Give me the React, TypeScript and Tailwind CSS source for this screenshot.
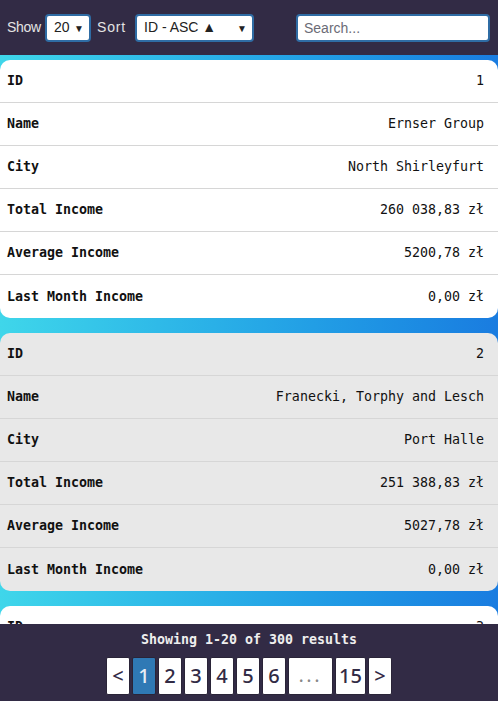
import React from "react";

const mono = "font-['DejaVu_Sans_Mono','Liberation_Mono',monospace]";

const companies = [
  {
    id: 1,
    name: "Ernser Group",
    city: "North Shirleyfurt",
    total: "260 038,83 zł",
    average: "5200,78 zł",
    lastMonth: "0,00 zł",
  },
  {
    id: 2,
    name: "Franecki, Torphy and Lesch",
    city: "Port Halle",
    total: "251 388,83 zł",
    average: "5027,78 zł",
    lastMonth: "0,00 zł",
  },
  {
    id: 3,
    name: "Bode - Kuhic",
    city: "Lake Ernestine",
    total: "248 112,40 zł",
    average: "4962,25 zł",
    lastMonth: "0,00 zł",
  },
];

const Row = ({ label, value, last }: { label: string; value: React.ReactNode; last?: boolean }) => (
  <div
    className={`flex h-[43px] items-center justify-between pl-[7px] pr-[14px] ${
      last ? "" : "border-b border-[#d6d6d6]"
    }`}
  >
    <span className="font-bold text-[#111]">{label}</span>
    <span className="text-[#111]">{value}</span>
  </div>
);

const Card = ({ c, odd }: { c: (typeof companies)[number]; odd: boolean }) => (
  <div className={`shrink-0 overflow-hidden rounded-[10px] ${odd ? "bg-[#e8e8e8]" : "bg-white"}`}>
    <Row label="ID" value={c.id} />
    <Row label="Name" value={c.name} />
    <Row label="City" value={c.city} />
    <Row label="Total Income" value={c.total} />
    <Row label="Average Income" value={c.average} />
    <Row label="Last Month Income" value={c.lastMonth} last />
  </div>
);

const Select = ({ value, className }: { value: string; className: string }) => (
  <div
    className={`relative flex h-[28px] items-center rounded-[4px] border-2 border-[#2f6ca4] bg-white pl-[7px] font-['Liberation_Sans',sans-serif] text-[14px] text-[#222] ${className}`}
  >
    {value}
    <span className="absolute right-[5px] top-[5px] text-[10px] text-[#222]">▼</span>
  </div>
);

const PageBtn = ({ children, active, w = "w-[24px]" }: { children: React.ReactNode; active?: boolean; w?: string }) => (
  <button
    className={`flex h-[38px] ${w} items-center justify-center rounded-[2px] border border-[#2a2438] text-[20px] font-medium ${
      active ? "bg-[#2f79b5] text-[#e8eef5]" : "bg-white text-[#322b45]"
    }`}
  >
    {children}
  </button>
);

export default function App() {
  return (
    <div className="flex h-[701px] w-[498px] flex-col overflow-hidden bg-gradient-to-r from-[#3fd6ea] to-[#1a7ce0]">
      <header className="flex h-[55px] shrink-0 items-center bg-[#322b45] pl-[7px] pr-[8px] font-['Liberation_Sans',sans-serif] text-[14px] text-[#e4e4e4]">
        <span className="w-[31px] tracking-[-0.3px]">Show</span>
        <Select value="20" className="ml-[7px] w-[46px]" />
        <span className="ml-[6px] w-[32px] tracking-[0.8px]">Sort</span>
        <Select value="ID - ASC ▲" className="ml-[6px] w-[119px]" />
        <input
          placeholder="Search..."
          className="ml-auto h-[28px] w-[194px] rounded-[4px] border-2 border-[#2f6ca4] bg-white px-[6px] font-['Liberation_Sans',sans-serif] text-[14px] text-[#222] placeholder:text-[#6b6b76] outline-none"
        />
      </header>

      <main className={`flex min-h-0 flex-1 flex-col gap-[15px] overflow-hidden pt-[5px] text-[13.3px] ${mono}`}>
        {companies.map((c, i) => (
          <Card key={c.id} c={c} odd={i % 2 === 1} />
        ))}
      </main>

      <footer className="flex h-[77px] shrink-0 flex-col items-center bg-[#322b45] pt-[6px]">
        <p className={`text-[13.3px] font-bold text-[#eeeeee] ${mono}`}>Showing 1-20 of 300 results</p>
        <div className="mt-[7px] flex gap-[2px] font-['Noto_Sans',sans-serif]">
          <PageBtn>&lt;</PageBtn>
          <PageBtn active>1</PageBtn>
          <PageBtn>2</PageBtn>
          <PageBtn>3</PageBtn>
          <PageBtn>4</PageBtn>
          <PageBtn>5</PageBtn>
          <PageBtn>6</PageBtn>
          <PageBtn w="w-[45px]">
            <span className="text-[18px] tracking-[3px] text-[#888]">...</span>
          </PageBtn>
          <PageBtn w="w-[31px]">15</PageBtn>
          <PageBtn>&gt;</PageBtn>
        </div>
      </footer>
    </div>
  );
}
